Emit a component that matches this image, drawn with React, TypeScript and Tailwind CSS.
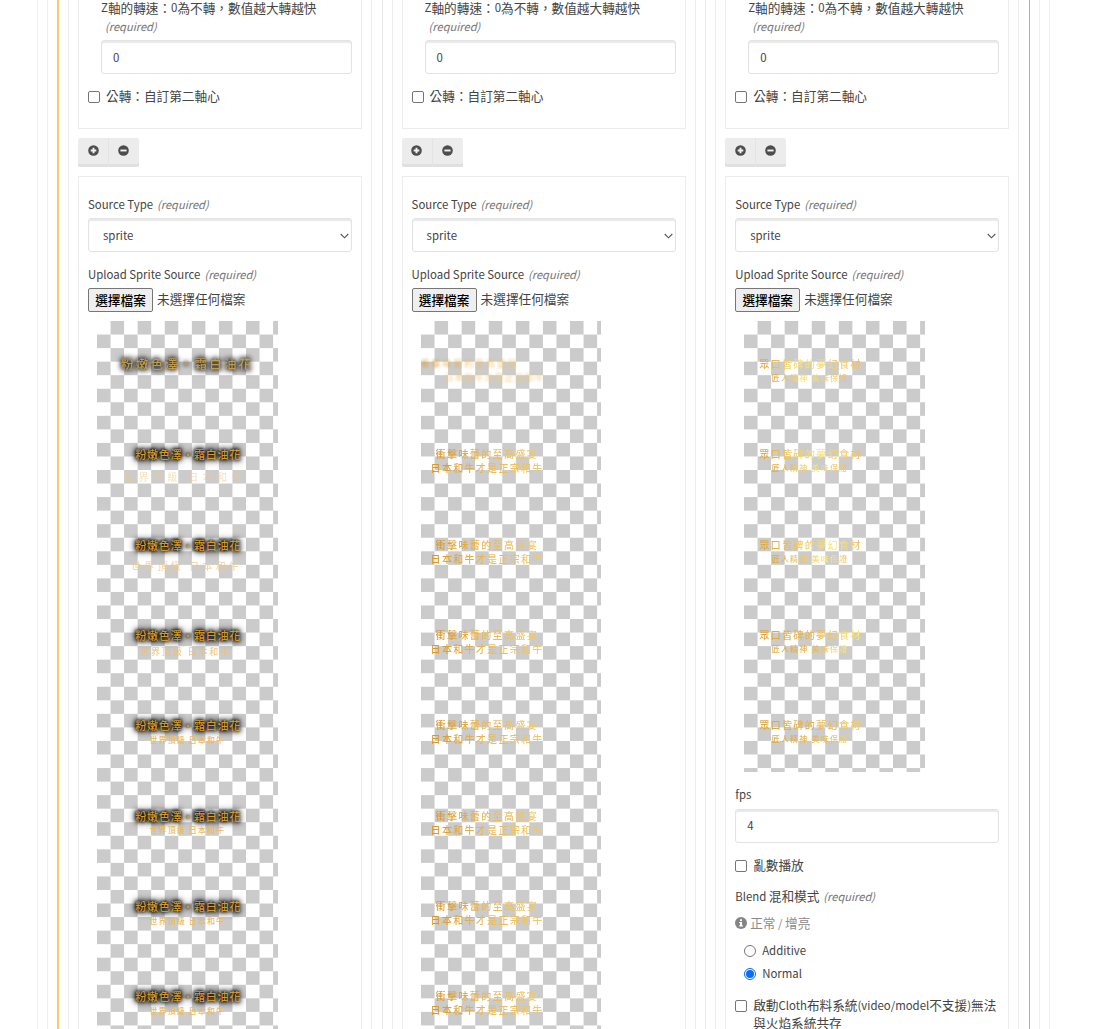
import React from 'react';

type Line = {
  text: string;
  x: number;
  y: number;
  size: number;
  gap: number;
  look: string;
};

const FRAME = 90.35;

const GOLD_DARK = 'bg-linear-to-r from-[#d9951f] via-[#e9ba58] to-[#f2c96c] bg-clip-text text-transparent';
const SHADOWED =
  'text-[#d3992a] [text-shadow:0_0_3px_#000,0_0_4px_#000,0_0_6px_#000,0_0_8px_#000]';

const marble: Line[] = [
  { text: '粉嫩色澤・霜白油花', x: 24, y: 43.5, size: 12.5, gap: 2.2, look: 'text-[#c09c4c] blur-[0.6px] [text-shadow:0_0_4px_#222,0_0_5px_#222,0_0_7px_#333]' },
  ...Array.from({ length: 7 }, (_, i): Line => ({
    text: '粉嫩色澤・霜白油花',
    x: 38.2,
    y: 43.5 + (i + 1) * FRAME,
    size: 11,
    gap: 0.75,
    look: SHADOWED,
  })),
  { text: '世界頂級 日本和牛', x: 27, y: 156.5, size: 10, gap: 4.4, look: 'text-[#efc98c] opacity-50 blur-[0.7px]' },
  { text: '世界頂級 日本和牛', x: 34, y: 245, size: 10, gap: 3.2, look: 'text-[#efc98c] opacity-70 blur-[0.5px]' },
  { text: '世界頂級 日本和牛', x: 43, y: 331.5, size: 9, gap: 1.9, look: 'text-[#ebc078] opacity-80 blur-[0.3px]' },
  ...Array.from({ length: 4 }, (_, i): Line => ({
    text: '世界頂級 日本和牛',
    x: 52.5,
    y: 58 + (i + 4) * FRAME,
    size: 8,
    gap: 1.1,
    look: 'text-[#edbb5c]',
  })),
];

const feast: Line[] = [
  { text: '衝擊味蕾的至高盛宴', x: 0, y: 43.5, size: 9, gap: 1.9, look: GOLD_DARK + ' opacity-70 blur-[0.9px]' },
  { text: '日本和牛才是正宗和牛', x: 24, y: 57.5, size: 9, gap: 1, look: 'text-[#f0c878] opacity-70 blur-[0.9px]' },
  ...Array.from({ length: 7 }, (_, i): Line[] => [
    { text: '衝擊味蕾的至高盛宴', x: 15, y: 43.5 + (i + 1) * FRAME, size: 10, gap: 1.4, look: GOLD_DARK },
    { text: '日本和牛才是正宗和牛', x: 10, y: 57.5 + (i + 1) * FRAME, size: 10, gap: 1.3, look: GOLD_DARK },
  ]).flat(),
];

const shine = [
  'bg-linear-to-r from-[#dda33a] via-[#f7e37a] via-40% to-[#eec068] bg-clip-text text-transparent',
  'bg-linear-to-r from-[#dda33a] via-[#f7e37a] via-55% to-[#eec068] bg-clip-text text-transparent',
  'bg-linear-to-r from-[#dda33a] via-[#f7e98a] via-75% to-[#eec068] bg-clip-text text-transparent',
  'bg-linear-to-r from-[#dda33a] via-[#eabb55] via-60% to-[#f9ec86] bg-clip-text text-transparent',
  'bg-linear-to-r from-[#dda33a] via-[#eabb55] via-70% to-[#f0cf70] bg-clip-text text-transparent',
];

const dream: Line[] = shine.flatMap((look, i): Line[] => [
  { text: '眾口皆碑的夢幻食材', x: 15, y: 43.5 + i * FRAME, size: 10.2, gap: 1.2, look },
  { text: '匠人精神 美味保證', x: 27.5, y: 57.5 + i * FRAME, size: 8, gap: 1.2, look },
]);

function Sprite({ lines, short }: { lines: Line[]; short?: boolean }) {
  return (
    <div
      className={
        'relative ml-[9px] mt-[8.5px] w-[180.6px] shrink-0 overflow-hidden bg-[repeating-conic-gradient(#cbcbcb_0_25%,#fff_0_50%)] bg-size-[27.1px_27.1px] ' +
        (short ? 'h-[451.5px]' : 'h-[1084px]')
      }
    >
      {lines.map((l, i) => (
        <span
          key={i}
          className={'absolute -translate-y-1/2 whitespace-pre font-medium leading-[14px] ' + l.look}
          style={{ left: l.x, top: l.y, fontSize: l.size, letterSpacing: l.gap }}
        >
          {l.text}
        </span>
      ))}
    </div>
  );
}

function Required() {
  return <em className="text-[11.1px] text-[#757575]">(required)</em>;
}

function Latin({ children }: { children: React.ReactNode }) {
  return <span className="text-[11.4px]">{children}</span>;
}

function Box() {
  return <span className="size-[12px] shrink-0 rounded-[2px] border border-[#767676] bg-white" />;
}

const field =
  'flex h-[34px] items-center rounded-[3px] border border-[#e3e3e3] bg-white pt-px shadow-[inset_0_2px_1px_#e9e9e9]';

function PlusMinus() {
  return (
    <div className="mt-[9px] flex h-[29px] w-[61px] shrink-0 rounded-[2px] bg-[#ececec] shadow-[inset_0_-3px_0_#e0e0e0]">
      <div className="flex w-[31px] justify-center border-r border-[#e4e4e4] pt-[7px]">
        <svg viewBox="0 0 11 11" className="size-[11px]">
          <circle cx="5.5" cy="5.5" r="5.3" fill="#4d4d4d" />
          <path d="M5.5 2.7v5.6M2.7 5.5h5.6" stroke="#f2f2f2" strokeWidth="1.9" />
        </svg>
      </div>
      <div className="flex w-[29px] justify-center pt-[7px]">
        <svg viewBox="0 0 11 11" className="size-[11px]">
          <circle cx="5.5" cy="5.5" r="5.3" fill="#4d4d4d" />
          <path d="M2.4 5.5h6.2" stroke="#f2f2f2" strokeWidth="1.9" />
        </svg>
      </div>
    </div>
  );
}

function Extras() {
  return (
    <>
      <div className="mt-[12px] h-[20px] leading-[20px]"><Latin>fps</Latin></div>
      <div className={field + ' mt-[4.500px] pl-[11px]'}><Latin>4</Latin></div>
      <div className="mt-[13px] flex h-[20px] items-center gap-[6px]">
        <Box />
        <span className="-mt-[3px]">亂數播放</span>
      </div>
      <div className="mt-[10px] flex h-[20px] items-baseline whitespace-pre leading-[20px]">
        <Latin>Blend </Latin>混和模式<span className="w-[4px]" />
        <Required />
      </div>
      <div className="mt-[7px] flex h-[20px] items-center gap-[3px] text-[#8b8b8b]">
        <svg viewBox="0 0 12 12" className="size-[12px]">
          <circle cx="6" cy="6" r="6" fill="#858585" />
          <path d="M5 2.2h2v1.7H5zM4.2 4.9H7v3.4h.9v1.3H4.2V8.3h.9V6.1h-.9z" fill="#fff" />
        </svg>
        <span>正常<Latin> / </Latin>增亮</span>
      </div>
      <div className="ml-[9px] mt-[8px] flex h-[20px] items-center gap-[6px]">
        <span className="size-[12px] rounded-full border border-[#767676]" />
        <Latin>Additive</Latin>
      </div>
      <div className="ml-[9px] mt-[3px] flex h-[20px] items-center gap-[6px]">
        <span className="flex size-[12px] items-center justify-center rounded-full border border-[#0b6cf4]">
          <span className="size-[8px] rounded-full bg-[#0b6cf4]" />
        </span>
        <Latin>Normal</Latin>
      </div>
      <div className="mt-[12px] flex gap-[6px] whitespace-nowrap leading-[18px]">
        <span className="flex pt-[4px]">
          <Box />
        </span>
        <span className="w-[246px]">
          啟動<Latin>Cloth</Latin>布料系統<Latin>(video/model</Latin>不支援<Latin>)</Latin>無法
          <br />
          與火焰系統共存
        </span>
      </div>
    </>
  );
}

function Column({ lines, last }: { lines: Line[]; last?: boolean }) {
  return (
    <section className="flex h-full w-[304px] shrink-0 flex-col border-x border-[#ececec] px-[9px]">
      <div className="h-[129px] w-[284px] shrink-0 border border-t-0 border-[#ececec] px-[9px]">
        <div className="-mt-px ml-[13px] flex h-[17px] items-center whitespace-nowrap">
          <Latin>Z</Latin>軸的轉速：<Latin>0</Latin>為不轉，數值越大轉越快
        </div>
        <div className="ml-[17px] mt-px flex h-[19px] items-center pb-px">
          <Required />
        </div>
        <div className={field + ' ml-[13px] mt-[4px] pl-[11px]'}><Latin>0</Latin></div>
        <div className="mt-[13px] flex h-[20px] items-center gap-[6px]">
          <Box />
          <span className="-mt-[3px]">公轉：自訂第二軸心</span>
        </div>
      </div>
      <PlusMinus />
      <div className="mt-[9px] min-h-0 w-[284px] flex-1 overflow-hidden border border-b-0 border-[#ececec] px-[9px] pt-[17px]">
        <div className="flex h-[20px] items-baseline leading-[20px]">
          <Latin>Source Type</Latin><span className="w-[4px]" />
          <Required />
        </div>
        <div className={field + ' mt-[4px] justify-between pl-[14px] pr-[2px]'}>
          <Latin>sprite</Latin>
          <svg viewBox="0 0 9 6" className="h-[6px] w-[9px]">
            <path d="M.7 1l3.8 3.8L8.300 1" fill="none" stroke="#555" strokeWidth="1.1" />
          </svg>
        </div>
        <div className="mt-[12px] flex h-[20px] items-baseline leading-[20px]">
          <Latin>Upload Sprite Source</Latin><span className="w-[4px]" />
          <Required />
        </div>
        <div className="mt-[4px] flex h-[24px] items-center gap-[4px]">
          <span className="flex h-[24px] w-[65px] items-center justify-center rounded-[2px] border border-[#767676] bg-[#efefef] pb-[2px] font-medium text-black">
            選擇檔案
          </span>
          <span className="-mt-[3px]">未選擇任何檔案</span>
        </div>
        <Sprite lines={lines} short={last} />
        {last && <Extras />}
      </div>
    </section>
  );
}

export default function App() {
  return (
    <main
      lang="zh-TW"
      className="flex h-[1029px] w-[1100px] overflow-hidden bg-white pl-[37px] font-['Noto_Sans_CJK_TC',sans-serif] text-[12.65px] text-[#444]"
    >
      <div className="flex w-[1013px] shrink-0 border-x border-[#f0f0f0] px-[9px]">
        <div className="flex w-full border-x border-[#f0f0f0] px-[9px]">
          <div className="flex w-full border-l-2 border-r border-l-[#fcc56f] border-r-[#f9a51c] pl-[9px]">
            <Column lines={marble} />
            <div className="ml-[9.600px] mr-[9px] w-px shrink-0 bg-[#e6e6e6]" />
            <Column lines={feast} />
            <div className="ml-[9.600px] mr-[9px] w-px shrink-0 bg-[#e9e9e9]" />
            <Column lines={dream} last />
          </div>
        </div>
      </div>
    </main>
  );
}
